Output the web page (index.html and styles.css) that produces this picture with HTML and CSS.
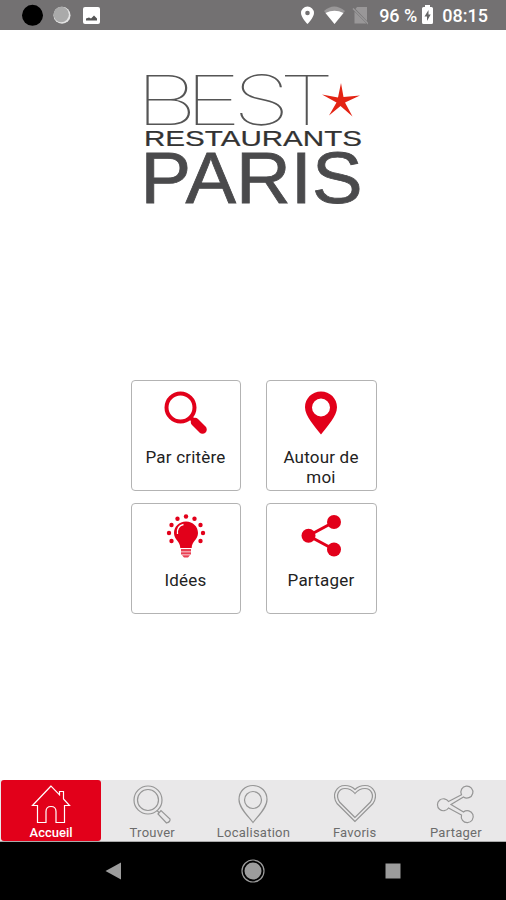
FILE: index.html
```html
<!DOCTYPE html>
<html lang="fr">

<head>
    <meta charset="UTF-8">
    <meta name="viewport" content="width=device-width, initial-scale=1.0">
    <title>Best Restaurants Paris</title>
    <link rel="stylesheet" href="styles.css">
</head>

<body>
    <header class="status">
        <svg class="status-left" width="84" height="30" viewBox="20 0 84 30">
            <circle cx="32.5" cy="15.3" r="10.5" fill="#000" />
            <circle cx="62" cy="15.3" r="8.5" fill="#e4e4e4" />
            <circle cx="61.2" cy="14.5" r="7.7" fill="#aaa" />
            <rect x="83" y="7" width="17" height="17" rx="2" fill="#fff" />
            <path d="M86 20.5v-2l3-1 2 1 3-3 3 3v2z" fill="#555" />
        </svg>
        <div class="status-right">
            <svg width="72" height="30" viewBox="297 0 72 30">
                <path d="M308.500 6.500a6.500 6.500 0 0 0-6.500 6.500c0 4.500 6.500 11 6.500 11s6.500-6.500 6.500-11a6.500 6.500 0 0 0-6.500-6.500z" fill="#fff" />
                <circle cx="308.500" cy="13" r="2.300" fill="#737172" />
                <path d="M325 11q10-9 21 0L335.500 24z" fill="#999798" />
                <path d="M326.500 13q9-4.500 18 0L335.500 24z" fill="#fff" />
                <path d="M358 7H368v14L356.500 9zM355.500 11.500l12 12h-12z" fill="#999798" />
                <path d="M354 8.500l15.500 15.500" stroke="#999798" stroke-width="1.500" />
            </svg>
            <span class="battery-text">96 %</span>
            <svg class="battery" width="11" height="20" viewBox="0 0 11 20">
                <path d="M3 0h5v2h1.500q1.500 0 1.500 1.500v14q0 1.500-1.500 1.500h-8Q0 19 0 17.500v-14Q0 2 1.500 2H3z" fill="#fff" />
                <path d="M6.500 5L2.500 11.500H5V16l3.700-6.500H6.500z" fill="#666" />
            </svg>
            <span class="clock">08:15</span>
        </div>
    </header>

    <main class="home">
        <svg class="logo" width="220" height="140" viewBox="143 70 220 140">
            <g class="logo-best">
                <text x="135.500" y="124.500" textLength="62" lengthAdjust="spacingAndGlyphs">B</text>
                <text x="184.800" y="124.500" textLength="56.500" lengthAdjust="spacingAndGlyphs">E</text>
                <text x="233" y="124.500" textLength="57" lengthAdjust="spacingAndGlyphs">S</text>
                <text x="279.500" y="124.500" textLength="54.500" lengthAdjust="spacingAndGlyphs">T</text>
            </g>
            <text class="logo-rest" x="144" y="146" textLength="218" lengthAdjust="spacingAndGlyphs">RESTAURANTS</text>
            <text class="logo-paris" x="140.500" y="202.700" textLength="222" lengthAdjust="spacingAndGlyphs">PARIS</text>
            <path d="M341 83L343.500 97L360 95.500L345 102.500L352.500 116.500L340.500 106L329 115.500L336.500 102.500L322 94.500L338 97.500Z" fill="#e42313" />
        </svg>

        <div class="cards">
            <a class="card">
                <svg width="44" height="44" viewBox="0 0 44 44">
                    <circle cx="16.500" cy="16.500" r="14" fill="none" stroke="#e2001a" stroke-width="4" />
                    <path d="M26 26l5 5" stroke="#e2001a" stroke-width="4.500" />
                    <path d="M31 31l7.500 7.500" stroke="#e2001a" stroke-width="8.500" stroke-linecap="round" />
                </svg>
                <span>Par critère</span>
            </a>
            <a class="card">
                <svg width="44" height="44" viewBox="0 0 44 44">
                    <path d="M22 .5C13 .5 6 7.500 6 16.200c0 9 10 19.500 16 27.300 6-7.800 16-18.300 16-27.300C38 7.500 31 .5 22 .5zm0 7a9 9 0 1 1 0 18 9 9 0 0 1 0-18z" fill="#e2001a" />
                </svg>
                <span>Autour de moi</span>
            </a>
            <a class="card">
                <svg width="44" height="44" viewBox="0 0 44 44" fill="#e2001a">
                    <path d="M22 7.500c-7 0-12 5.200-12 11.500 0 6.500 6.300 8.500 6.300 15h11.400c0-6.500 6.300-8.500 6.300-15C34 12.700 29 7.500 22 7.500z" />
                    <path d="M13.500 20q-1-8 6-9.500" fill="none" stroke="#fff" stroke-width="1.300" />
                    <path d="M17 35h10v2.500H17zM17 38.200h10v2.300H17zM18 41.200h8l-2 2.300h-4z" opacity=".75" />
                    <circle cx="22" cy="2.500" r="2.200" />
                    <circle cx="13.500" cy="4.700" r="2.200" />
                    <circle cx="30.500" cy="4.700" r="2.200" />
                    <circle cx="7.500" cy="11" r="2.200" />
                    <circle cx="36.500" cy="11" r="2.200" />
                    <circle cx="5" cy="19" r="2.200" />
                    <circle cx="39" cy="19" r="2.200" />
                    <circle cx="7.500" cy="27" r="2.200" />
                    <circle cx="36.500" cy="27" r="2.200" />
                </svg>
                <span>Idées</span>
            </a>
            <a class="card">
                <svg width="44" height="44" viewBox="0 0 44 44" fill="#e2001a">
                    <path d="M35 8L9.500 21.700 35 35.500" fill="none" stroke="#e2001a" stroke-width="3" />
                    <circle cx="35" cy="8" r="7" />
                    <circle cx="9.500" cy="21.700" r="7" />
                    <circle cx="35" cy="35.500" r="7" />
                </svg>
                <span>Partager</span>
            </a>
        </div>
    </main>

    <nav class="tabs">
        <a class="tab active">
            <svg width="42" height="42" viewBox="0 0 42 42">
                <path d="M21 3L2.500 22.500H7.500V39.500H16V28.500q0-5 5-5t5 5v11h8.500v-17h5L33.500 16V8.500H29.500V11.800z" />
            </svg>
            <span>Accueil</span>
        </a>
        <a class="tab">
            <svg width="42" height="42" viewBox="0 0 42 42">
                <circle cx="17" cy="17" r="14" />
                <circle cx="17" cy="17" r="10.500" />
                <path d="M26 27.500l2 2M27 31l3-3.500 9 8.500q.5 3-3.500 4z" />
            </svg>
            <span>Trouver</span>
        </a>
        <a class="tab">
            <svg width="42" height="42" viewBox="0 0 42 42">
                <path d="M21 2.500C13 2.500 7 8.500 7 16.500 7 25 16 33 21 39.500 26 33 35 25 35 16.500 35 8.500 29 2.500 21 2.500z" />
                <circle cx="21" cy="17" r="8.500" />
            </svg>
            <span>Localisation</span>
        </a>
        <a class="tab">
            <svg width="42" height="42" viewBox="0 0 42 42">
                <path d="M21 38.500L3 20.500C-3 11 3 2.500 11 2.500q6 0 10 4 4-4 10-4C39 2.500 45 11 39 20.500z" />
                <path d="M21 34.500L5.500 19C1 12 5 5.500 11 5.500q6 0 10 5 4-5 10-5C37 5.500 41 12 36.500 19z" />
            </svg>
            <span>Favoris</span>
        </a>
        <a class="tab">
            <svg width="42" height="42" viewBox="0 0 42 42">
                <path d="M13.500 18.500L26.500 11.700A6 6 0 1 1 28.500 14L16 21.500 28.500 29A6 6 0 1 1 26.500 32L13.500 25A6 6 0 1 1 13.500 18.500z" />
            </svg>
            <span>Partager</span>
        </a>
    </nav>

    <footer class="navbar">
        <svg width="24" height="24" viewBox="0 0 24 24">
            <path d="M4.500 12L20 3.500v17z" />
        </svg>
        <svg width="24" height="24" viewBox="0 0 24 24">
            <circle cx="12" cy="12" r="11" class="ring" />
            <circle cx="12" cy="12" r="8.500" />
        </svg>
        <svg width="24" height="24" viewBox="0 0 24 24">
            <rect x="4.500" y="4.500" width="15" height="15" />
        </svg>
    </footer>
</body>

</html>
```
FILE: styles.css
```css
* {
    box-sizing: border-box;
}

body {
    margin: 0;
    height: 900px;
    display: flex;
    flex-direction: column;
    background-color: #fff;
    font-family: Roboto, "Liberation Sans", sans-serif;
    overflow: hidden;
}

svg {
    display: block;
    flex: none;
}

.status {
    height: 30px;
    display: flex;
    justify-content: space-between;
    background-color: #737172;
    padding: 0 18px 0 20px;
}

.status-right {
    display: flex;
    align-items: center;
    color: #fff;
    font-size: 18px;
    font-weight: 500;
    line-height: 30px;
    padding-top: 2px;
}

.status-right svg {
    margin-top: -2px;
}

.battery-text {
    margin-left: 11px;
    margin-right: 5px;
    white-space: nowrap;
}

.clock {
    margin-left: 9px;
}

.home {
    flex: 1;
    display: flex;
    flex-direction: column;
    align-items: center;
    padding-top: 40px;
}

.logo {
    overflow: visible;
}

.logo-best {
    font-family: Inter, "Liberation Sans", sans-serif;
    font-weight: 100;
    font-size: 69px;
    fill: #555;
}

.logo-rest {
    font-family: "Liberation Sans", Arial, sans-serif;
    font-size: 22px;
    fill: #333;
    stroke: #333;
    stroke-width: 0.2px;
}

.logo-paris {
    font-family: "Liberation Sans", Arial, sans-serif;
    font-size: 73px;
    fill: #4a4a4c;
    stroke: #4a4a4c;
    stroke-width: 0.8px;
}

.cards {
    display: grid;
    grid-template-columns: 110px 111px;
    grid-auto-rows: 111px;
    column-gap: 25px;
    row-gap: 12px;
    margin-top: 170px;
    margin-left: 1px;
}

.card {
    display: flex;
    flex-direction: column;
    align-items: center;
    padding-top: 10px;
    border: 1px solid #b3b3b3;
    border-radius: 4px;
    color: #222;
    font-size: 17px;
    line-height: 20px;
    letter-spacing: 0.2px;
    text-align: center;
}

.card span {
    margin-top: 12px;
    width: 90px;
}

.tabs {
    height: 62px;
    display: grid;
    grid-template-columns: repeat(5, 1fr);
    background-color: #e9e8e9;
    border-bottom: 1px solid #aaa;
}

.tab {
    display: flex;
    flex-direction: column;
    align-items: center;
    padding-top: 3px;
    padding-left: 1px;
    color: #6c6c6c;
    font-size: 13px;
    line-height: 16px;
    letter-spacing: 0.25px;
}

.tab svg {
    fill: none;
    stroke: #969696;
    stroke-width: 1.2px;
}

.tab.active {
    background-color: #e2001a;
    border-radius: 3px;
    margin-left: 1px;
    padding-left: 0;
    color: #fff;
    font-weight: 500;
    letter-spacing: 0;
}

.tab.active svg {
    stroke: #fff;
}

.navbar {
    height: 58px;
    display: flex;
    justify-content: space-between;
    align-items: center;
    padding: 0 101px;
    background-color: #000;
}

.navbar svg {
    fill: #9c9c9c;
}

.navbar .ring {
    fill: none;
    stroke: #9c9c9c;
    stroke-width: 1.2px;
}
```
